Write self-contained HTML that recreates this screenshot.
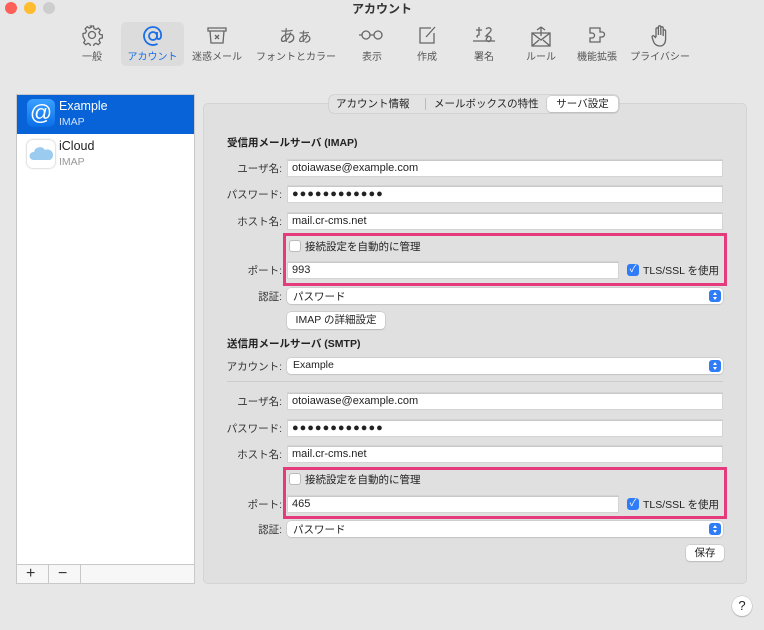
<!DOCTYPE html><html><head><meta charset="utf-8"><style>
*{box-sizing:border-box;margin:0;padding:0}
body{width:764px;height:630px;background:#e7e7e7;font-family:"Liberation Sans","Noto Sans CJK JP",sans-serif;font-size:11px;color:#222;position:relative;overflow:hidden}
.a{position:absolute}
.dot{position:absolute;top:2px;width:12px;height:12px;border-radius:50%}
.tb{position:absolute;top:22px;height:44px;text-align:center;font-size:10px;color:#555}
.tb svg{display:block;margin:2px auto 0}
.tb span{position:absolute;left:0;right:0;top:26px;white-space:nowrap}
.lbl{position:absolute;right:482px;font-size:10.5px;color:#333;text-align:right}
.in{position:absolute;left:287px;width:436px;height:18px;background:#fff;border:1px solid #d4d4d4;font-size:11px;padding:2px 4px;color:#222;box-shadow:0 1px 0 #c8c8c8 inset}
.sel{position:absolute;left:287px;width:436px;height:16px;background:#fff;border-radius:4px;box-shadow:0 0 0 .5px #bbb,0 1px 1px #ccc;font-size:10.5px;padding:1px 6px}
.sel i{position:absolute;right:2px;top:2px;width:12px;height:12px;background:#2f7cf6;border-radius:3px}
.sel i:before{content:"";position:absolute;left:4px;top:2px;border:2px solid transparent;border-bottom:3px solid #fff;border-top:0}
.sel i:after{content:"";position:absolute;left:4px;top:7px;border:2px solid transparent;border-top:3px solid #fff;border-bottom:0}
.btn{position:absolute;background:#fff;border-radius:4px;box-shadow:0 0 0 .5px #bbb,0 1px 1px #bbb;font-size:10.5px;text-align:center}
.pink{position:absolute;left:283px;width:444px;border:3px solid #e53a7b}
.cb{position:absolute;width:12px;height:12px;border-radius:3px;background:#fff;border:1px solid #bbb}
.cbk{position:absolute;width:12px;height:12px;border-radius:3px;background:#2f7cf6;color:#fff;font-size:10px;line-height:12px;text-align:center}
.h{position:absolute;left:227px;font-weight:bold;font-size:10.5px}
</style></head><body>
<div class="dot" style="left:5px;background:#fe5f57"></div>
<div class="dot" style="left:24px;background:#febc2e"></div>
<div class="dot" style="left:43px;background:#cdcdcd"></div>
<div class="a" style="left:0;width:764px;top:0px;text-align:center;font-weight:bold;font-size:12px;color:#333">アカウント</div>

<div class="tb" style="left:75px;width:34px"><svg width="22" height="22" viewBox="0 0 22 22" fill="none" stroke="#666" stroke-width="1.3"><circle cx="11" cy="11" r="3.5"/><path d="M9.5 2h3l.5 2.5 2 1 2.2-1.4 2.1 2.1-1.4 2.2 1 2 2.5.5v3l-2.5.5-1 2 1.4 2.2-2.1 2.1-2.2-1.4-2 1-.5 2.5h-3l-.5-2.5-2-1-2.2 1.4-2.1-2.1 1.4-2.2-1-2L2 12.5v-3l2.5-.5 1-2-1.4-2.2 2.1-2.1 2.2 1.4 2-1z"/></svg><span>一般</span></div>
<div class="tb" style="left:121px;width:63px;background:#dcdcdc;border-radius:5px;color:#1a6ee6"><svg width="24" height="24" viewBox="0 0 24 24" fill="none" stroke="#1a6ee6" stroke-width="1.8"><circle cx="12" cy="12" r="4"/><path d="M16 8v5.5c0 2 3.5 2.5 4-1 .8-5-3-9.5-8-9.5a9 9 0 1 0 4.5 16.8"/></svg><span>アカウント</span></div>
<div class="tb" style="left:188px;width:58px"><svg width="24" height="22" viewBox="0 0 24 22" fill="none" stroke="#666" stroke-width="1.3"><path d="M3 4h18v3H3zM5 7l1 12h12l1-12M10 11l4 4M14 11l-4 4"/></svg><span>迷惑メール</span></div>
<div class="tb" style="left:253px;width:86px"><div style="font-size:17px;color:#666;height:24px">あぁ</div><span>フォントとカラー</span></div>
<div class="tb" style="left:352px;width:40px"><svg width="30" height="22" viewBox="0 0 30 22" fill="none" stroke="#666" stroke-width="1.3"><circle cx="9" cy="11" r="4"/><circle cx="21" cy="11" r="4"/><path d="M13 11h4M5 11H2"/></svg><span>表示</span></div>
<div class="tb" style="left:410px;width:34px"><svg width="22" height="22" viewBox="0 0 22 22" fill="none" stroke="#666" stroke-width="1.3"><path d="M15 4H4v15h14V9M10 13l9-10"/></svg><span>作成</span></div>
<div class="tb" style="left:465px;width:38px"><svg width="28" height="22" viewBox="0 0 28 22" fill="none" stroke="#666" stroke-width="1.3"><path d="M3 17h22M6 6h6M9 3v8c-2 0-3 2-1 2M16 5c3-3 7 0 4 3l-4 4c3 0 7 1 4 5-2 2-6-2-2-4"/></svg><span>署名</span></div>
<div class="tb" style="left:522px;width:38px"><svg width="26" height="24" viewBox="0 0 26 24" fill="none" stroke="#666" stroke-width="1.3"><path d="M4 9h18v13H4zM4 9l9 7 9-7M4 22l7-6M22 22l-7-6M13 12V3M13 3l-4 3M13 3l4 3"/></svg><span>ルール</span></div>
<div class="tb" style="left:574px;width:46px"><svg width="24" height="22" viewBox="0 0 24 22" fill="none" stroke="#666" stroke-width="1.3"><path d="M5 4h10v4h2a2.5 2.5 0 0 1 0 5h-2v5H5v-4h2a2.5 2.5 0 0 0 0-5H5z"/></svg><span>機能拡張</span></div>
<div class="tb" style="left:628px;width:64px"><svg width="22" height="24" viewBox="0 0 22 24" fill="none" stroke="#666" stroke-width="1.3"><path d="M7 13V5a1.2 1.2 0 0 1 2.4 0v6V3a1.2 1.2 0 0 1 2.4 0v8V4a1.2 1.2 0 0 1 2.4 0v8V7a1.2 1.2 0 0 1 2.4 0v8c0 4-2 7-5.5 7S5 20 4 16l-1-3a1.2 1.2 0 0 1 2-1l2 2"/></svg><span>プライバシー</span></div>

<div class="a" style="left:16px;top:94px;width:179px;height:490px;background:#fff;border:1px solid #c8c8c8"></div>
<div class="a" style="left:17px;top:95px;width:177px;height:39px;background:#0862d8"></div>
<div class="a" style="left:27px;top:99px;width:28px;height:28px;border-radius:6px;background:linear-gradient(#3aa0ff,#0a6fe8);color:#fff;font-size:22px;text-align:center;line-height:27px">@</div>
<div class="a" style="left:59px;top:99px;color:#fff;font-size:12.5px">Example</div>
<div class="a" style="left:59px;top:116px;color:#cfe0f8;font-size:10.5px">IMAP</div>
<div class="a" style="left:27px;top:140px;width:28px;height:28px;border-radius:6px;background:#fff;box-shadow:0 0 2px #aaa"><svg width="28" height="28" viewBox="0 0 28 28"><path d="M6 20a4 4 0 0 1 1-8 6 6 0 0 1 11-2 5 5 0 0 1 5 10z" fill="#9ccbf0"/></svg></div>
<div class="a" style="left:59px;top:139px;font-size:12.5px">iCloud</div>
<div class="a" style="left:59px;top:156px;color:#999;font-size:10.5px">IMAP</div>
<div class="a" style="left:17px;top:564px;width:177px;height:19px;background:#f7f7f7;border-top:1px solid #c8c8c8"></div>
<div class="a" style="left:48px;top:564px;width:1px;height:19px;background:#c8c8c8"></div>
<div class="a" style="left:80px;top:564px;width:1px;height:19px;background:#c8c8c8"></div>
<div class="a" style="left:26px;top:565px;font-size:16px;color:#333">+</div>
<div class="a" style="left:58px;top:565px;font-size:16px;color:#333">−</div>

<div class="a" style="left:203px;top:103px;width:544px;height:481px;background:#e0e0e0;border:1px solid #d4d4d4;border-radius:5px"></div>
<div class="a" style="left:329px;top:95px;width:290px;height:18px;background:#e3e3e3;border-radius:5px;box-shadow:0 0 0 .5px #c3c3c3"></div>
<div class="a" style="left:336px;top:96px;font-size:10.5px">アカウント情報</div>
<div class="a" style="left:425px;top:98px;width:1px;height:12px;background:#bbb"></div>
<div class="a" style="left:434px;top:96px;font-size:10.5px">メールボックスの特性</div>
<div class="btn" style="left:547px;top:96px;width:71px;height:16px;line-height:16px">サーバ設定</div>

<div class="h" style="top:135px">受信用メールサーバ (IMAP)</div>
<div class="lbl" style="top:161px">ユーザ名:</div><div class="in" style="top:159px">otoiawase@example.com</div>
<div class="lbl" style="top:187px">パスワード:</div><div class="in" style="top:185px;letter-spacing:1px">●●●●●●●●●●●●</div>
<div class="lbl" style="top:214px">ホスト名:</div><div class="in" style="top:212px">mail.cr-cms.net</div>
<div class="pink" style="top:233px;height:53px"></div>
<div class="cb" style="left:289px;top:240px"></div><div class="a" style="left:305px;top:239px;font-size:10.5px">接続設定を自動的に管理</div>
<div class="lbl" style="top:263px">ポート:</div><div class="in" style="top:261px;width:332px">993</div>
<div class="cbk" style="left:627px;top:264px">✓</div><div class="a" style="left:643px;top:263px;font-size:10.5px">TLS/SSL を使用</div>
<div class="lbl" style="top:289px">認証:</div><div class="sel" style="top:288px">パスワード<i></i></div>
<div class="btn" style="left:287px;top:312px;width:98px;height:17px;line-height:17px">IMAP の詳細設定</div>

<div class="h" style="top:336px">送信用メールサーバ (SMTP)</div>
<div class="lbl" style="top:359px">アカウント:</div><div class="sel" style="top:358px">Example<i></i></div>
<div class="a" style="left:227px;top:381px;width:496px;height:1px;background:#ccc"></div>
<div class="lbl" style="top:394px">ユーザ名:</div><div class="in" style="top:392px">otoiawase@example.com</div>
<div class="lbl" style="top:421px">パスワード:</div><div class="in" style="top:419px;letter-spacing:1px">●●●●●●●●●●●●</div>
<div class="lbl" style="top:447px">ホスト名:</div><div class="in" style="top:445px">mail.cr-cms.net</div>
<div class="pink" style="top:467px;height:52px"></div>
<div class="cb" style="left:289px;top:473px"></div><div class="a" style="left:305px;top:472px;font-size:10.5px">接続設定を自動的に管理</div>
<div class="lbl" style="top:497px">ポート:</div><div class="in" style="top:495px;width:332px">465</div>
<div class="cbk" style="left:627px;top:498px">✓</div><div class="a" style="left:643px;top:497px;font-size:10.5px">TLS/SSL を使用</div>
<div class="lbl" style="top:522px">認証:</div><div class="sel" style="top:521px">パスワード<i></i></div>
<div class="btn" style="left:686px;top:545px;width:38px;height:16px;line-height:16px">保存</div>

<div class="a" style="left:732px;top:596px;width:20px;height:20px;border-radius:50%;background:#fff;box-shadow:0 0 0 .5px #bbb,0 1px 1px #aaa;text-align:center;line-height:20px;font-size:13px">?</div>
</body></html>
